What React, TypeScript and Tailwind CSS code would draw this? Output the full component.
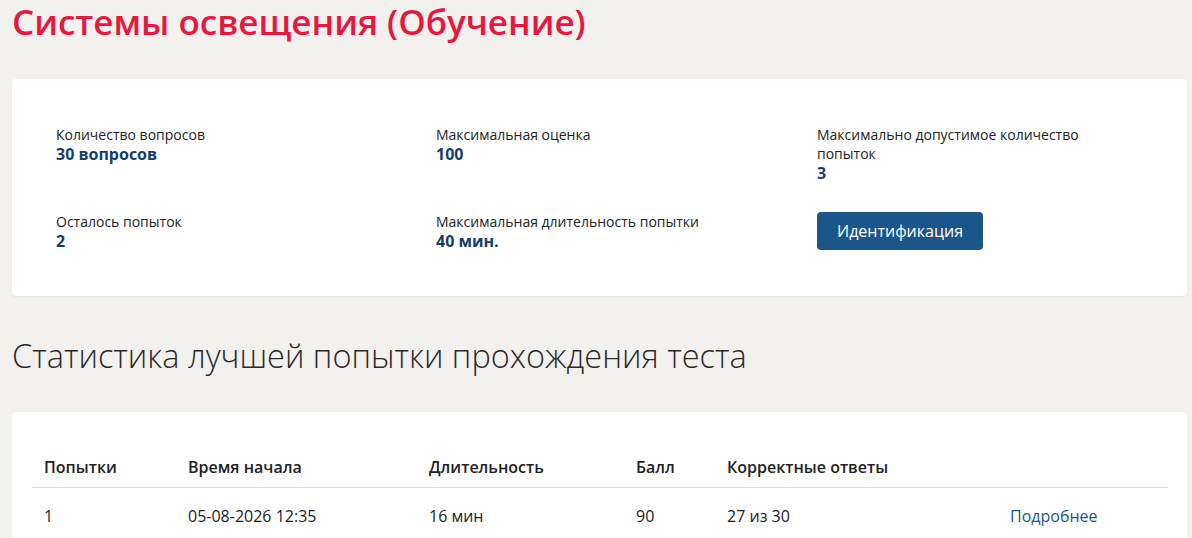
import React from "react";

const stats = [
  { label: "Количество вопросов", value: "30 вопросов" },
  { label: "Максимальная оценка", value: "100" },
  { label: "Максимально допустимое количество попыток", value: "3" },
  { label: "Осталось попыток", value: "2" },
  { label: "Максимальная длительность попытки", value: "40 мин." },
];

const columns = [
  { title: "Попытки", w: "w-[144px]" },
  { title: "Время начала", w: "w-[241px]" },
  { title: "Длительность", w: "w-[207px]" },
  { title: "Балл", w: "w-[91px]" },
  { title: "Корректные ответы", w: "w-[283px]" },
  { title: "", w: "flex-1" },
];

const row = ["1", "05-08-2026 12:35", "16 мин", "90", "27 из 30"];

const Stat = ({ label, value }: { label: string; value: string }) => (
  <div className="pr-6">
    <div className="text-[14px] leading-[19px] text-[#222]">{label}</div>
    <div className="text-[16px] leading-[21px] font-bold text-[#163e6a]">{value}</div>
  </div>
);

export default function App() {
  return (
    <div
      className="min-h-screen bg-[#f2f1ee] pl-3 pr-[5px] pb-10"
      style={{ fontFamily: '"Open Sans", "Noto Sans", sans-serif' }}
    >
      {/* Title */}
      <h1 className="text-[35px] leading-[44px] font-semibold text-[#e8173f]">
        Системы освещения (Обучение)
      </h1>

      {/* Test info card */}
      <div className="mt-[35px] bg-white rounded-[4px] shadow-[0_1px_2px_rgba(0,0,0,0.06)] pl-[44px] pr-6 pt-[46px] pb-[44px]">
        <div className="grid grid-cols-[380px_381px_1fr] gap-y-[28px]">
          <Stat {...stats[0]} />
          <Stat {...stats[1]} />
          <Stat {...stats[2]} />
          <Stat {...stats[3]} />
          <Stat {...stats[4]} />
          <div>
            <button className="h-[38px] px-5 rounded-[4px] bg-[#1c5589] text-white text-[16px] leading-[20px]">
              Идентификация
            </button>
          </div>
        </div>
      </div>

      {/* Statistics heading */}
      <h2 className="mt-[39px] text-[32.5px] leading-[42px] font-light text-[#2b2b2b]">
        Статистика лучшей попытки прохождения теста
      </h2>

      {/* Attempts table */}
      <div className="mt-[35px] bg-white rounded-[4px] pl-5 pr-[19px] pt-[44px] pb-6">
        <div className="flex border-b border-[#dedede] pb-[9px]">
          {columns.map((c) => (
            <div key={c.title} className={`${c.w} pl-3 text-[16px] leading-[22px] font-semibold text-[#222]`}>
              {c.title}
            </div>
          ))}
        </div>
        <div className="flex pt-[17px]">
          {row.map((v, i) => (
            <div key={i} className={`${columns[i].w} pl-3 text-[16px] leading-[22px] text-[#222]`}>
              {v}
            </div>
          ))}
          <div className="flex-1 pl-3 text-[16px] leading-[22px] text-[#1c5589]">Подробнее</div>
        </div>
      </div>
    </div>
  );
}
